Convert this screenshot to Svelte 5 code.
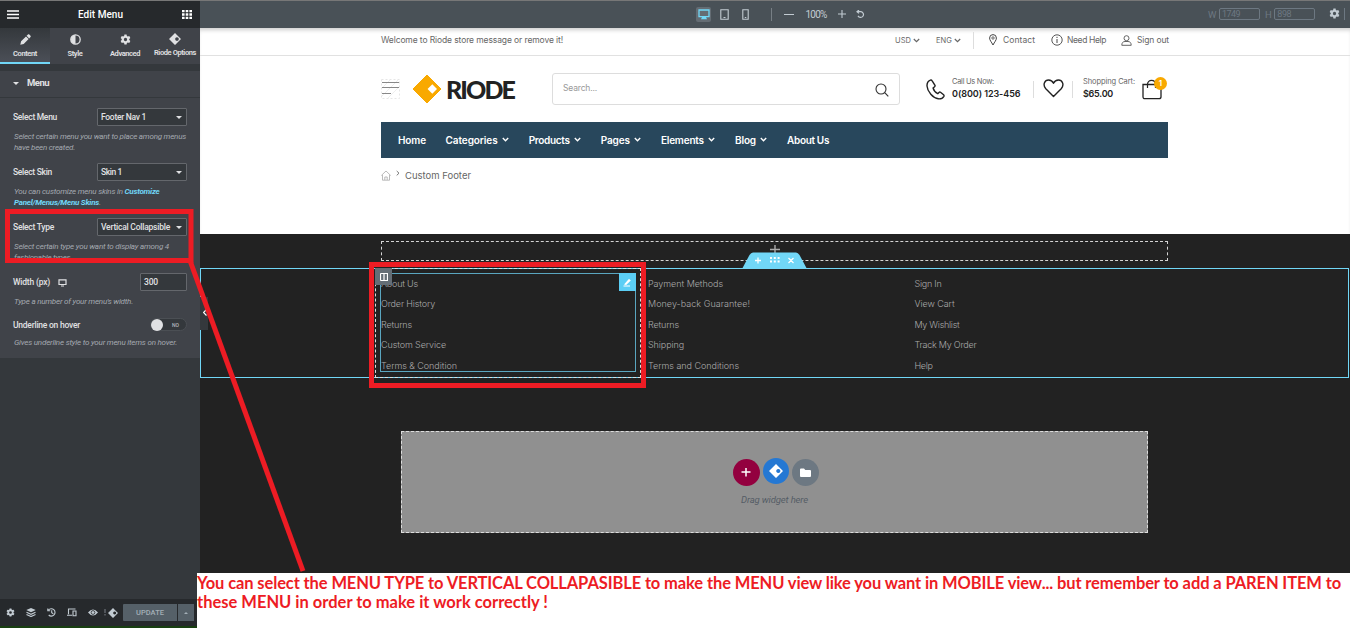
<script>
  function fit(node, width) {
    const range = document.createRange();
    range.selectNodeContents(node);
    const natural = range.getBoundingClientRect().width;
    const count = node.textContent.length;
    node.style.letterSpacing = `${(width - natural) / count}px`;
    node.style.width = `${width}px`;
  }

  const tabs = [
    { name: 'Content', icon: 'pencil', w: 24 },
    { name: 'Style', icon: 'contrast', w: 15 },
    { name: 'Advanced', icon: 'gear', w: 30 },
    { name: 'Riode Options', icon: 'riode', w: 42 }
  ];
  const nav = [
    { name: 'Home', w: 28 },
    { name: 'Categories', w: 52, more: true },
    { name: 'Products', w: 41, more: true },
    { name: 'Pages', w: 29, more: true },
    { name: 'Elements', w: 43, more: true },
    { name: 'Blog', w: 21, more: true },
    { name: 'About Us', w: 42 }
  ];
  const columns = [
    [['About Us', 37], ['Order History', 54], ['Returns', 31], ['Custom Service', 65], ['Terms & Condition', 76]],
    [['Payment Methods', 75], ['Money-back Guarantee!', 102], ['Returns', 31], ['Shipping', 36], ['Terms and Conditions', 91]],
    [['Sign In', 27], ['View Cart', 40], ['My Wishlist', 45], ['Track My Order', 62], ['Help', 18]]
  ];
</script>

{#snippet gear(size)}
  <svg width={size} height={size} viewBox="0 0 20 20"><path fill="currentColor" fill-rule="evenodd" d="M8 1h4l.5 2.6 1.8 1 2.5-.9 2 3.4-2 1.8v2.2l2 1.8-2 3.4-2.5-.9-1.8 1L12 19H8l-.5-2.6-1.8-1-2.5.9-2-3.4 2-1.8V8.900l-2-1.800 2-3.400 2.500.9 1.800-1zM10 7a3 3 0 1 0 0 6 3 3 0 0 0 0-6z" /></svg>
{/snippet}

{#snippet chevron(w, stroke)}
  <svg width={w} height={w} viewBox="0 0 7 7"><path d="M.8 2l2.700 2.700L6.200 2" fill="none" stroke="currentColor" stroke-width={stroke} /></svg>
{/snippet}

{#snippet riode(size)}
  <svg width={size} height={size} viewBox="0 0 20 20"><path fill="currentColor" fill-rule="evenodd" d="M10 0l10 10-10 10L0 10zM13.300 7a3 3 0 1 0 .01 0z" /></svg>
{/snippet}

<div class="app">
  <aside>
    <header>
      <svg width="12" height="9" viewBox="0 0 12 9"><path d="M0 1h12M0 4.500h12M0 8h12" stroke="#fff" stroke-width="1.700" /></svg>
      <span class="t" use:fit={45}>Edit Menu</span>
      <svg width="10" height="9" viewBox="0 0 10 9"><path d="M0 1.200h10M0 4.500h10M0 7.800h10" stroke="#fff" stroke-width="2.300" stroke-dasharray="2.600 1.100" /></svg>
    </header>
    <nav class="tabs">
      {#each tabs as tab, i}
        <div class="tab" class:active={i === 0} class:last={i === 3}>
          <div class="glyph">
            {#if tab.icon === 'pencil'}
              <svg width="11" height="11" viewBox="0 0 11 11"><path fill="currentColor" d="M.3 10.700l.8-3.400L6 2.400l2.600 2.600L3.700 9.900zM6.600 1.800L8 .5c.4-.4.9-.4 1.300 0l1.200 1.200c.4.4.4.9 0 1.300L9.200 4.400z" /></svg>
            {:else if tab.icon === 'contrast'}
              <svg width="11" height="11" viewBox="0 0 11 11"><circle cx="5.500" cy="5.500" r="4.700" fill="none" stroke="currentColor" stroke-width="1.300" /><path d="M5.500 1a4.500 4.500 0 0 0 0 9z" fill="currentColor" /></svg>
            {:else if tab.icon === 'gear'}
              {@render gear(11)}
            {:else}
              {@render riode(12)}
            {/if}
          </div>
          <span class="t" use:fit={tab.w}>{tab.name}</span>
        </div>
      {/each}
    </nav>
    <div class="section-title"><i class="caret"></i><span class="t" use:fit={22}>Menu</span></div>
    <div class="controls">
      <div class="row"><span class="t" use:fit={44}>Select Menu</span><div class="select"><span class="t" use:fit={45}>Footer Nav 1</span><i class="caret"></i></div></div>
      <div class="desc"><span class="t" use:fit={172}>Select certain menu you want to place among menus</span><span class="t" use:fit={61}>have been created.</span></div>
      <div class="row"><span class="t" use:fit={39}>Select Skin</span><div class="select"><span class="t" use:fit={21}>Skin 1</span><i class="caret"></i></div></div>
      <div class="desc"><div><span class="t" use:fit={110.5}>You can customize menu skins in&nbsp;</span><b class="t" use:fit={35}>Customize</b></div><div><b class="t" use:fit={85}>Panel/Menus/Menu Skins</b>.</div></div>
      <div class="row"><span class="t" use:fit={41}>Select Type</span><div class="select"><span class="t" use:fit={69}>Vertical Collapsible</span><i class="caret"></i></div></div>
      <div class="desc"><span class="t" use:fit={155}>Select certain type you want to display among 4</span><span class="t" use:fit={58}>fashionable types.</span></div>
      <div class="row">
        <span class="t" use:fit={37}>Width (px)</span>
        <svg class="device" width="9" height="8" viewBox="0 0 9 8"><path d="M1 .8h7v4.700H1zM3 7h3" fill="none" stroke="currentColor" stroke-width="1.200" /></svg>
        <div class="select number"><span class="t" use:fit={14}>300</span></div>
      </div>
      <div class="desc one"><span class="t" use:fit={119}>Type a number of your menu's width.</span></div>
      <div class="row short"><span class="t" use:fit={67}>Underline on hover</span><div class="toggle"><i></i><span>NO</span></div></div>
      <div class="desc last"><span class="t" use:fit={163}>Gives underline style to your menu items on hover.</span></div>
    </div>
    <footer>
      <div class="tools">
        {@render gear(9)}
        <svg width="10" height="9" viewBox="0 0 10 9"><path d="M5 0l4.700 2L5 4.200.3 2z" fill="currentColor" /><path d="M.5 4.300L5 6.300l4.500-2M.5 6.500L5 8.500l4.500-2" fill="none" stroke="currentColor" stroke-width="1.200" /></svg>
        <svg width="9" height="9" viewBox="0 0 9 9"><path d="M1.500 2A3.700 3.700 0 1 1 1.700 7M.8.4v2.400h2.400M4.700 2.300v2.500l1.600 1" fill="none" stroke="currentColor" stroke-width="1.100" /></svg>
        <svg width="10" height="9" viewBox="0 0 10 9"><path d="M8.500 1H1.500v5.300M0 7.200h5M6 3h3v4.700H6z" fill="none" stroke="currentColor" stroke-width="1.100" /></svg>
        <svg width="10" height="7" viewBox="0 0 10 7"><path d="M0 3.500Q5-2.500 10 3.500 5 9.500 0 3.500z" fill="currentColor" /><circle cx="5" cy="3.500" r="1.900" fill="none" stroke="#26292c" stroke-width=".8" /></svg>
        <svg class="dots" width="2" height="7" viewBox="0 0 2 7"><path d="M1 0v4M1 5v1.500" stroke="#7b8087" /></svg>
        {@render riode(10)}
      </div>
      <div class="update"><span class="t" use:fit={28}>UPDATE</span></div>
      <div class="more"><i></i></div>
    </footer>
  </aside>

  <main>
    <div class="devicebar">
      <div class="devices">
        <div class="on"><svg width="12" height="11" viewBox="0 0 12 11"><path d="M1 1h10v6.700H1z" fill="none" stroke="currentColor" stroke-width="1.300" /><path d="M4 8h4l1 2.300H3z" fill="currentColor" /></svg></div>
        <svg width="9" height="11" viewBox="0 0 9 11"><path d="M.8.7h7.400v9.500H.8zM3.500 8.500h2" fill="none" stroke="currentColor" stroke-width="1.100" /></svg>
        <svg width="7" height="11" viewBox="0 0 7 11"><path d="M.8.7h5.400v9.500H.8zM2.800 8.500h1.500" fill="none" stroke="currentColor" stroke-width="1.100" /></svg>
      </div>
      <div class="zoom">
        <svg width="10" height="8" viewBox="0 0 10 8"><path d="M0 4.500h10" stroke="currentColor" /></svg>
        <span class="t" use:fit={21}>100%</span>
        <svg width="8" height="8" viewBox="0 0 8 8"><path d="M0 4h8M4 0v8" stroke="currentColor" stroke-width="1.100" /></svg>
        <svg width="9" height="9" viewBox="0 0 9 9"><path d="M1 1.700h4a2.900 2.900 0 1 1-3 4.200M3 0L1 1.700l2 1.700" fill="none" stroke="currentColor" stroke-width="1.200" /></svg>
      </div>
      <div class="size"><span>W</span><div><span class="t" use:fit={18}>1749</span></div><span class="h">H</span><div><span class="t" use:fit={14}>898</span></div></div>
      <div class="settings">{@render gear(11)}</div>
    </div>

    <div class="store">
      <div class="welcome">
        <span class="t msg" use:fit={182}>Welcome to Riode store message or remove it!</span>
        <div class="links">
          <span class="t drop" use:fit={16}>USD</span>{@render chevron(7, 1.2)}
          <span class="t drop eng" use:fit={16}>ENG</span>{@render chevron(7, 1.2)}
          <i class="sep"></i>
          <svg width="8" height="12" viewBox="0 0 8 12"><path d="M4 11C2.500 8 .6 6.300.6 4a3.400 3.400 0 0 1 6.800 0C7.400 6.300 5.500 8 4 11z" fill="none" stroke="#444" /><circle cx="4" cy="4" r="1.200" fill="none" stroke="#444" stroke-width=".8" /></svg>
          <span class="t" use:fit={32}>Contact</span>
          <svg class="info" width="12" height="12" viewBox="0 0 12 12"><circle cx="6" cy="6" r="5.200" fill="none" stroke="#444" stroke-width=".9" /><path d="M6 5v4M6 2.800V4" stroke="#444" /></svg>
          <span class="t help" use:fit={39}>Need Help</span>
          <svg class="person" width="11" height="11" viewBox="0 0 11 11"><circle cx="5.500" cy="3.200" r="2.500" fill="none" stroke="#555" stroke-width=".9" /><path d="M.8 10.300c0-2.500 1.200-3.800 3.200-3.800h3c2 0 3.200 1.300 3.200 3.800z" fill="none" stroke="#555" stroke-width=".9" /></svg>
          <span class="t sign" use:fit={32}>Sign out</span>
        </div>
      </div>

      <div class="brand">
        <svg class="lines" width="19" height="20" viewBox="0 0 19 20"><path d="M1 9l8-8M1 17L17 1M7 19l11-11" stroke="#eee" fill="none" /><path d="M.5.5h18v19H.5z" fill="none" stroke="#e6e6e6" stroke-dasharray="2 2" /><path d="M1 3.500h17M1 8.500h17M1 14.500h9" stroke="#888" /></svg>
        <svg class="mark" width="30" height="30" viewBox="0 0 30 30"><path d="M15 1l14 14-14 14L1 15z" fill="#f9a900" stroke="#f9a900" stroke-linejoin="round" /><path d="M20.300 10.300l4.700 4.700-4.700 4.700-4.700-4.700z" fill="#fff" /></svg>
        <span class="t logo" use:fit={68}>RIODE</span>
        <div class="search"><span class="t" use:fit={34}>Search...</span><svg width="14" height="14" viewBox="0 0 14 14"><circle cx="6" cy="6" r="5" fill="none" stroke="#333" stroke-width="1.100" /><path d="M9.700 9.700L13.300 13.300" stroke="#333" stroke-width="1.200" /></svg></div>
        <svg class="phone" width="19" height="21" viewBox="0 0 19 21"><path d="M4.300 1.100C2.200 2 .9 4.200 1 7c.4 5.600 6 12.300 11.300 12.800 2.500.2 4.600-.8 5.600-2.500.3-.6.200-1-.3-1.500l-3.100-2.500c-.5-.4-1-.4-1.500.1l-1.200 1.200c-1.900-.9-4.200-3.600-4.700-5.600l1.500-1.200c.5-.4.6-.9.4-1.500L6 1.600c-.4-.7-.9-.9-1.700-.5z" fill="none" stroke="#222" stroke-width="1.400" /></svg>
        <div class="stack call"><span class="t" use:fit={42}>Call Us Now:</span><b class="t" use:fit={68.5}>0(800) 123-456</b></div>
        <i class="sep"></i>
        <svg class="heart" width="21" height="19" viewBox="0 0 21 19"><path d="M10.500 17.500L2.800 9.700C-.8 5.500 2 1 5.500 1c2.300 0 4 1.200 5 3.300C11.500 2.200 13.200 1 15.500 1c3.500 0 6.300 4.500 2.700 8.700z" fill="none" stroke="#222" stroke-width="1.400" stroke-linejoin="round" /></svg>
        <i class="sep"></i>
        <div class="stack cart"><span class="t" use:fit={52}>Shopping Cart:</span><b class="t" use:fit={30}>$65.00</b></div>
        <div class="bag"><svg width="20" height="21" viewBox="0 0 20 21"><path d="M1 5.500h18v12.200q0 2-2 2H3q-2 0-2-2z" fill="none" stroke="#222" stroke-width="1.300" /><path d="M5.500 9V5.500C5.500 0 13.500 0 13.500 5.500V9" fill="none" stroke="#222" stroke-width="1.200" /></svg><em>1</em></div>
      </div>

      <nav class="mainnav">
        {#each nav as item}
          <div class="item"><span class="t" use:fit={item.w}>{item.name}</span>{#if item.more}{@render chevron(7, 1.4)}{/if}</div>
        {/each}
      </nav>

      <div class="crumbs">
        <svg width="10" height="11" viewBox="0 0 10 11"><path d="M.3 5.500L5 1l4.700 4.500M1.500 5v5.200h7V5M3.800 10V7h2.400v3" fill="none" stroke="#aaa" stroke-width=".8" /></svg>
        <svg class="arr" width="4" height="7" viewBox="0 0 4 7"><path d="M.7 1l2.300 2.200L.7 5.400" fill="none" stroke="#777" /></svg>
        <span class="t" use:fit={66}>Custom Footer</span>
      </div>
    </div>

    <div class="editor">
      <div class="slot"><svg width="10" height="9" viewBox="0 0 10 9"><path d="M0 4.500h10M5 0v9" stroke="#aaa" stroke-width="1.400" /></svg></div>
      <div class="section">
        <div class="handle">
          <svg width="65" height="17" viewBox="0 0 65 17"><path d="M0 17L7.500 3Q9 .5 11 .5H54q2 0 3.500 2.500L65 17z" fill="#71d7f7" /><path d="M13 8.500h6M16 5.500v6M46.500 6l5 5M51.500 6l-5 5" stroke="#fff" stroke-width="1.300" /><path d="M28 6h10M28 9.500h10" stroke="#fff" stroke-width="2" stroke-dasharray="2 1.800" /></svg>
        </div>
        <div class="cols">
          {#each columns as column, i}
            <div class="col" class:selected={i === 0}>
              <div class="widget">
                {#each column as [label, w]}<span class="t" use:fit={w}>{label}</span>{/each}
                {#if i === 0}
                  <div class="edit"><svg width="9" height="9" viewBox="0 0 9 9"><path d="M1 6.500L6 .8l1.800 1.600L3.200 7z" fill="#fff" /><path d="M.5 8h6.500" stroke="#fff" /></svg></div>
                {/if}
              </div>
              {#if i === 0}
                <div class="colhandle"><svg width="8" height="8" viewBox="0 0 8 8"><path d="M.5.5h7v7h-7M.5.5v7M4 1v6" fill="none" stroke="#fff" stroke-width="1.200" /></svg></div>
              {/if}
            </div>
          {/each}
        </div>
      </div>
      <div class="drop">
        <div class="buttons">
          <div class="add"><svg width="10" height="10" viewBox="0 0 10 10"><path d="M.5 4h9M5 0v8.500" stroke="#fff" stroke-width="1.500" /></svg></div>
          <div class="blue">{@render riode(14)}</div>
          <div class="folder"><svg width="11" height="10" viewBox="0 0 11 10"><path d="M0 1.500Q0 .5 1 .5h3l1.300 1.500H10q1 0 1 1V8q0 1-1 1H1Q0 9 0 8z" fill="#fff" /></svg></div>
        </div>
        <span class="t" use:fit={67}>Drag widget here</span>
      </div>
    </div>
  </main>

  <div class="collapse"><svg width="4" height="7" viewBox="0 0 4 7"><path d="M3.500.5l-3 3 3 3" fill="none" stroke="#fff" stroke-width="1.200" /></svg></div>
  <p class="note">
    <span class="t" use:fit={1144}>You can select the MENU TYPE to VERTICAL COLLAPASIBLE to make the MENU view like you want in MOBILE view... but remember to add a PAREN ITEM to</span>
    <span class="t" use:fit={351}>these MENU in order to make it work correctly !</span>
  </p>
  <svg class="marks" width="1350" height="628" viewBox="0 0 1350 628">
    <g fill="none" stroke="#ed1c24" stroke-width="5">
      <rect x="7.500" y="211.500" width="183.500" height="49" />
      <rect x="371.500" y="264.500" width="272" height="121" />
      <path d="M190.500 262L303 571" />
    </g>
  </svg>
</div>

<style>
  :global(body) { margin: 0; overflow: hidden; }
  * { box-sizing: border-box; }
  svg { flex: none; display: block; }
  .app { position: relative; display: grid; grid-template-columns: 200px 1150px; width: 1350px; height: 628px; overflow: hidden; font-family: Inter, sans-serif; background: #222; }
  .t { display: inline-block; white-space: nowrap; flex: none; }

  aside { display: flex; flex-direction: column; background: #34383c; border-top: 1px solid #777; font-family: Roboto, sans-serif; color: #e0e1e3; font-size: 8.500px; font-weight: 500; }
  header { height: 27px; flex: none; display: flex; align-items: center; justify-content: space-between; padding: 0 8px 0 7px; background: #26292c; color: #fff; font-size: 10px; }
  .tabs { display: flex; height: 36px; flex: none; background: #404349; }
  .tab { width: 50px; display: flex; flex-direction: column; align-items: center; padding-top: 6px; font-size: 7.500px; line-height: 9px; font-weight: 600; }
  .tab.active { background: linear-gradient(#34383c, #4b4f57); border-bottom: 2px solid #71d7f7; }
  .tab.last { padding-top: 5px; }
  .glyph { height: 15px; color: #e0e1e3; }
  .section-title { display: flex; align-items: center; gap: 8px; flex: none; height: 27px; margin-top: 7px; padding-left: 13px; background: #404349; border-bottom: 1px solid #34383c; font-size: 9.500px; font-weight: 700; line-height: 12px; padding-bottom: 2px; }
  .caret { width: 0; height: 0; border: 3px solid transparent; border-top-color: #e0e1e3; border-bottom: 0; }
  .controls { background: #404349; padding: 10px 13px 0; height: 260px; flex: none; }
  .row { display: flex; align-items: center; justify-content: space-between; height: 18px; }
  .row.short { height: 14px; }
  .row.short > .t { margin-top: -1px; }
  .select { display: flex; align-items: center; justify-content: space-between; width: 90px; height: 18px; padding: 0 4px 0 3px; background: #34383c; border: 1px solid #64676c; border-radius: 1px; }
  .number { width: 47px; padding-bottom: 1px; }
  .device { margin: 1px auto 0 8px; }
  .desc { display: flex; flex-direction: column; align-items: flex-start; margin: 5px 0 10px; padding-left: 1px; font-size: 8px; line-height: 11px; height: 22px; font-style: italic; font-weight: 400; color: #a4a9b0; }
  .desc div { display: flex; height: 11px; }
  .desc b { color: #71d7f7; font-weight: 700; }
  .desc.one { height: 11px; margin-bottom: 11px; }
  .desc.last { height: 11px; margin-bottom: 0; }
  .toggle { display: flex; align-items: center; width: 37px; height: 13px; border-radius: 7px; background: #34383c; border: 1px solid #4b4f54; font-size: 5px; color: #b4b8bd; gap: 9px; margin-top: -1px; }
  .toggle i { width: 12px; height: 12px; border-radius: 50%; background: #e0e1e3; }
  footer { margin-top: auto; height: 29px; flex: none; display: flex; align-items: center; padding: 0 6px 0; background: #26292c; border-bottom: 2px solid #183f11; }
  .tools { display: flex; align-items: center; width: 117px; gap: 11px; color: #c2cbd2; }
  .tools .dots { margin: 0 -9px 0 -5px; }
  .update { width: 54px; height: 17px; display: flex; align-items: center; justify-content: center; background: #556068; color: #a4afb7; font-size: 7.500px; border-radius: 1px 0 0 1px; }
  .more { width: 16px; height: 17px; display: grid; place-items: center; background: #556068; margin-left: 1px; }
  .more i { border: 2px solid transparent; border-bottom-color: #a4afb7; border-top: 0; }

  main { display: flex; flex-direction: column; min-width: 0; }
  .devicebar { height: 28px; flex: none; display: flex; align-items: center; border-top: 1px solid #777; background: #495157; color: #c2cbd2; font-family: Roboto, sans-serif; font-size: 10px; padding-bottom: 1px; }
  .devices { display: flex; align-items: center; gap: 13px; margin-left: 496px; width: 76px; height: 13px; border-right: 1px solid #777f85; }
  .on { width: 15px; height: 15px; display: grid; place-items: center; background: #646c73; color: #71d7f7; border-radius: 2px; margin-right: -4px; }
  .zoom { display: flex; align-items: center; gap: 11.500px; margin-left: 12px; width: 92px; }
  .zoom svg:last-child { margin-left: -2px; }
  .size { display: flex; align-items: center; color: #6d7882; margin-left: 332px; font-size: 9.500px; }
  .size div { width: 41px; height: 12px; display: flex; align-items: center; border: 1px solid #6d7882; border-radius: 2px; padding-left: 2px; font-size: 9px; margin-left: 2.500px; }
  .size .h { margin-left: 5px; }
  .settings { margin-left: auto; width: 16px; height: 12px; border-right: 1px solid #6d7882; margin-right: 5px; }
  .store { height: 206px; flex: none; background: #fff; color: #666; box-shadow: inset 0 4px 4px -2px #0003; }
  .welcome { height: 28px; display: flex; justify-content: space-between; padding: 0 181px 3px 181px; align-items: center; border-bottom: 1px solid #e1e1e1; font-size: 8.500px; }
  .links { display: flex; align-items: center; }
  .drop + :global(svg) { margin-left: 2px; }
  .drop { font-size: 7.500px; padding-top: 1px; }
  .eng { margin-left: 16px; }
  .sep { width: 1px; height: 17px; background: #ddd; }
  .links .sep { margin: 0 15px 0 12px; }
  .links svg + .t:not(.drop) { margin-left: 6px; }
  .info { margin-left: 16px; }
  .links svg + .help:not(.drop) { margin-left: 4px; }
  .links svg + .sign:not(.drop) { margin-left: 5px; }
  .person { margin-left: 15px; }
  .brand { height: 66px; display: flex; align-items: center; padding-left: 181px; }
  .mark { margin-left: 12px; }
  .logo { margin-left: 4px; font-family: Lato, sans-serif; font-weight: 900; font-size: 25px; color: #222; line-height: 30px; margin-top: -1px; }
  .search { width: 348px; height: 32px; margin-left: 38px; display: flex; align-items: center; justify-content: space-between; border: 1px solid #ddd; border-radius: 3px; padding: 0 10px; font-size: 8.500px; color: #999; }
  .search .t { margin-top: -2px; }
  .search svg { margin-top: 1px; }
  .phone { margin-left: 26px; }
  .stack { display: flex; flex-direction: column; font-size: 7.500px; line-height: 12px; margin-left: 7px; width: 69px; padding-bottom: 2px; }
  .stack b { color: #222; font-size: 9px; font-weight: 600; }
  .brand .sep { margin-left: 12px; }
  .heart { margin-left: 9px; margin-top: -2px; }
  .brand .heart + .sep { margin-left: 8px; }
  .cart { margin-left: 10px; width: 52px; }
  .bag { position: relative; margin-left: 7px; }
  .bag em { position: absolute; left: 12px; top: -2px; width: 13px; height: 13px; border-radius: 50%; background: #f9a900; color: #fff; font-style: normal; font-weight: 600; font-size: 8px; line-height: 13px; text-align: center; }
  .mainnav { display: flex; align-items: center; gap: 19.600px; height: 36px; width: 787px; margin-left: 181px; padding: 0 0 1px 17px; background: #28475c; color: #fff; font-size: 10px; font-weight: 600; }
  .item { display: flex; align-items: center; gap: 4.500px; }
  .crumbs { display: flex; align-items: center; margin: 11px 0 0 181px; height: 12px; font-size: 9.500px; }
  .arr { margin: -3px 5px 0 5px; }

  .editor { height: 394px; padding-top: 7px; }
  .slot { width: 787px; height: 20px; margin-left: 181px; border: 1px dashed #d5d5d5; display: flex; justify-content: center; padding-top: 3px; }
  .section { position: relative; margin-top: 7px; height: 110px; width: 1149px; border: 1px solid #71d7f7; padding-left: 174px; }
  .handle { position: absolute; left: 541px; top: -17px; }
  .cols { display: flex; margin-top: -1px; }
  .col { position: relative; width: 266.500px; height: 110px; padding: 4px; border: 1px solid transparent; }
  .selected { border: 1px dashed #ddd; width: 266px; }
  .widget { position: relative; height: 99px; display: flex; flex-direction: column; padding-left: 1px; border: 1px solid transparent; color: #aaa; font-size: 9px; line-height: 20.400px; font-weight: 300; }
  .widget .t { height: 20.400px; }
  .selected .widget { border-color: #5aa6c0; padding-left: 0; }
  .edit { position: absolute; right: -1px; top: -1px; width: 17px; height: 18px; background: #5bcef5; display: grid; place-items: center; }
  .colhandle { position: absolute; left: -1px; top: -1px; width: 17px; height: 17px; background: #646e76; display: grid; place-items: center; }
  div.drop { width: 747px; height: 102px; margin: 53px 0 0 201px; padding-top: 27px; background: #909090; border: 1px dashed #ddd; display: flex; flex-direction: column; align-items: center; font-family: Roboto, sans-serif; font-size: 9.500px; font-style: italic; color: #555d66; }
  .buttons { display: flex; gap: 3px; margin: 0 0 8px 2px; }
  .buttons div { width: 27px; height: 27px; border-radius: 50%; display: grid; place-items: center; color: #fff; }
  .add { background: #93003f; }
  .buttons .blue { background: #2578d3; width: 26px; height: 26px; margin-top: -1px; }
  .folder { background: #6d7882; }

  .collapse { position: absolute; left: 200px; top: 297px; width: 8px; height: 33px; background: #34383c; display: flex; align-items: center; padding: 0 0 2px 3px; }
  .note { position: absolute; left: 197px; top: 573px; width: 1153px; height: 55px; margin: 0; padding-top: 1px; background: #fff; color: #ed1c24; font: 700 16.500px/19px Lato, sans-serif; display: flex; flex-direction: column; }
  .marks { position: absolute; left: 0; top: 0; pointer-events: none; }
</style>
